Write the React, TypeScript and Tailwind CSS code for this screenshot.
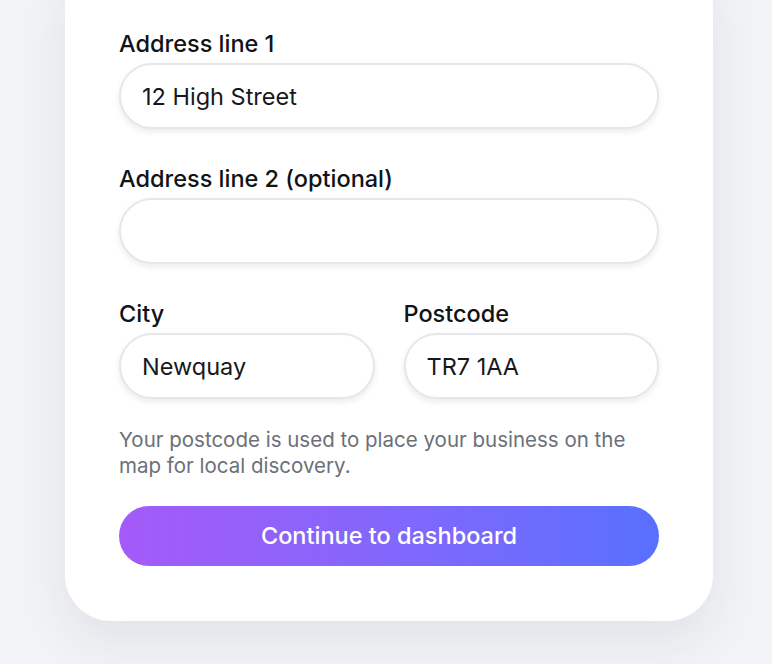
import React from 'react'

const font = { fontFamily: 'Inter, "Noto Sans", sans-serif' }

function Field({ label, value }: { label: string; value: string }) {
  return (
    <label className="flex flex-col gap-[4px] min-w-0">
      <span className="text-[23.5px] leading-[30px] font-[450] text-[#111318]">{label}</span>
      <input
        readOnly
        value={value}
        className="h-[66px] w-full rounded-full border-2 border-[#e6e7eb] bg-white px-[21px] text-[23.5px] text-[#16181d] shadow-[0_3px_6px_rgba(0,0,0,0.08)] outline-none"
      />
    </label>
  )
}

export default function App() {
  return (
    <div className="min-h-[664px] w-full bg-[#f2f3f6] flex justify-center pl-[6px]" style={font}>
      <div className="w-[648px] -mt-[40px] mb-[43px] self-start rounded-[46px] bg-white px-[54px] pt-[69px] pb-[55px] shadow-[0_20px_50px_rgba(30,40,70,0.08)]">
        <div className="flex flex-col gap-[35px]">
          <Field label="Address line 1" value="12 High Street" />
          <Field label="Address line 2 (optional)" value="" />
          <div className="grid grid-cols-2 gap-[29px]">
            <Field label="City" value="Newquay" />
            <Field label="Postcode" value="TR7 1AA" />
          </div>
        </div>
        <p className="mt-[28px] text-[20.5px] leading-[26px] text-[#6b7078]">
          Your postcode is used to place your business on the map for local discovery.
        </p>
        <button className="mt-[27px] h-[60px] w-full rounded-full bg-gradient-to-r from-[#a45af8] to-[#5870fe] text-[23.5px] font-[450] text-white">
          Continue to dashboard
        </button>
      </div>
    </div>
  )
}
